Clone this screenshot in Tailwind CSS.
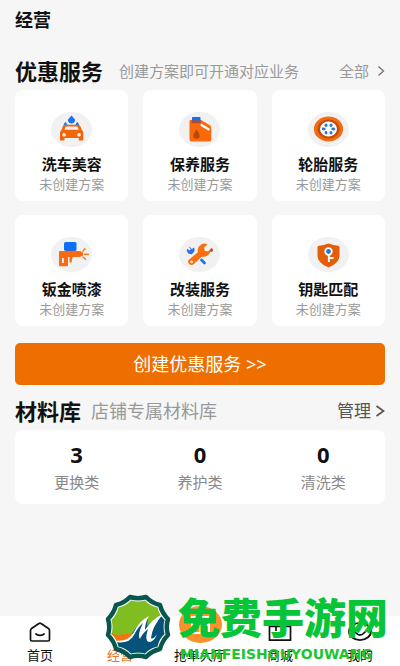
<!DOCTYPE html>
<html lang="zh-CN">
<head>
<meta charset="utf-8">
<meta name="viewport" content="width=device-width, initial-scale=1">
<title>经营</title>
<script src="https://cdn.jsdelivr.net/npm/@tailwindcss/browser@4"></script>
</head>
<body class="bg-[#f6f6f6] font-['Noto_Sans','Noto_Sans_CJK_SC',sans-serif] text-[#111]">
<div class="relative flex min-h-screen flex-col">
  <header class="flex h-10 items-center px-[15px]">
    <h1 class="text-lg font-bold leading-6">经营</h1>
  </header>

  <main class="flex-1 px-[15px] pt-3">
    <section>
      <div class="flex h-[38px] items-center">
        <h2 class="text-[22px] font-bold leading-8">优惠服务</h2>
        <p class="ml-4 text-[15px] leading-6 text-[#999]">创建方案即可开通对应业务</p>
        <a href="#" class="ml-auto flex items-center gap-2 text-[15px] leading-6 text-[#999]">全部
          <svg class="h-3 w-2" viewBox="0 0 8 12" fill="none" stroke="#777" stroke-width="1.4"><path d="M1.500 1.500 6.500 6l-5 4.500"/></svg>
        </a>
      </div>

      <div class="grid grid-cols-3 gap-x-[15px] gap-y-3.5">
        <a href="#" class="flex flex-col items-center rounded-lg bg-white pt-[22px] pb-2">
          <svg class="h-[35px] w-[41px]" viewBox="0 0 41 35"><ellipse cx="20.500" cy="17.500" rx="20.500" ry="17.500" fill="#f1f1f1"/>
            <path d="M20.500 3.500 24 7.500a3.600 3.300 0 1 1-7 0ZM14.500 9.800l1.700 2.400a1.800 1.800 0 1 1-3.400 0ZM26.300 9.800l1.700 2.400a1.800 1.800 0 1 1-3.400 0Z" fill="#1b73ee"/>
            <path fill-rule="evenodd" d="M13.700 12.700h13.600q1.600 0 2.200 1.800l1.300 3.500q1.500 1 1.500 3v7.500h-4.500V26H13.500v2.500H9V21q0-2 1.500-3l1.200-3.500q.5-1.800 2-1.800ZM14.600 14.500l-1.100 3.200h14.200l-1.300-3.200ZM13 21a1.800 1.800 0 1 0 .1 0ZM28 21a1.800 1.800 0 1 0 .1 0Z" fill="#f26509"/></svg>
          <h3 class="mt-1.5 text-[15px] font-bold leading-[22px]">洗车美容</h3>
          <p class="text-[13px] leading-[18px] text-[#999]">未创建方案</p>
        </a>
        <a href="#" class="flex flex-col items-center rounded-lg bg-white pt-[22px] pb-2">
          <svg class="h-[35px] w-[41px]" viewBox="0 0 41 35"><ellipse cx="20.500" cy="17.500" rx="20.500" ry="17.500" fill="#f1f1f1"/>
            <path d="M11.500 8H22l8.500 5q1.800 1 1.800 3v11.500q0 2-2 2H12.500q-2 0-2-2V9q0-1 1-1Z" fill="#f96a0a"/>
            <path d="M12.800 8h9v3.200h-9Z" fill="#b34b2c"/><rect x="13" y="5" width="8.500" height="3.500" rx=".7" fill="#1a70e8"/>
            <path d="m22.500 13 7 4.300" stroke="#fff" stroke-width="2.200" stroke-linecap="round"/>
            <path d="M17.500 17.500q3.300 4.500 3.200 6.200a3.200 3 0 0 1-6.400 0q0-1.700 3.200-6.200Z" fill="#bd480c"/></svg>
          <h3 class="mt-1.5 text-[15px] font-bold leading-[22px]">保养服务</h3>
          <p class="text-[13px] leading-[18px] text-[#999]">未创建方案</p>
        </a>
        <a href="#" class="flex flex-col items-center rounded-lg bg-white pt-[22px] pb-2">
          <svg class="h-[35px] w-[41px]" viewBox="0 0 41 35"><ellipse cx="20.500" cy="17.500" rx="20.500" ry="17.500" fill="#f1f1f1"/>
            <ellipse cx="20.500" cy="17" rx="14.600" ry="12.500" fill="#f26a12"/><ellipse cx="20.500" cy="17" rx="11" ry="9.400" fill="#c64b09"/><ellipse cx="20.500" cy="17" rx="8.500" ry="7.400" fill="#fff"/>
            <g fill="#2c76d8"><ellipse cx="15.700" cy="17" rx="2" ry="1.400"/><ellipse cx="25.300" cy="17" rx="2" ry="1.400"/><ellipse cx="18" cy="13.300" rx="1.500" ry="1.700"/><ellipse cx="23" cy="13.300" rx="1.500" ry="1.700"/><ellipse cx="18" cy="20.700" rx="1.500" ry="1.700"/><ellipse cx="23" cy="20.700" rx="1.500" ry="1.700"/></g></svg>
          <h3 class="mt-1.5 text-[15px] font-bold leading-[22px]">轮胎服务</h3>
          <p class="text-[13px] leading-[18px] text-[#999]">未创建方案</p>
        </a>
        <a href="#" class="flex flex-col items-center rounded-lg bg-white pt-[22px] pb-2">
          <svg class="h-[35px] w-[41px]" viewBox="0 0 41 35"><ellipse cx="20.500" cy="17.500" rx="20.500" ry="17.500" fill="#f1f1f1"/>
            <path fill-rule="evenodd" d="M9 14h20l3 1.500v3L29 20h-7.500l-1 5.500h-2V20H17v8q0 1.300-1.300 1.300H9.300Q8 29.300 8 28V15q0-1 1-1Zm2 7v5h1.800V21Z" fill="#f86b10"/>
            <path d="M15 14h9l1-1.500H14Z" fill="#a65250"/><rect x="13" y="5" width="12.500" height="8.800" rx="1.500" fill="#0c70f6"/>
            <path d="m32 14 2-2.200M33.500 17.300h4M32 20l2.500 2.200" stroke="#f57a28" stroke-width="1.500" stroke-linecap="round"/></svg>
          <h3 class="mt-1.5 text-[15px] font-bold leading-[22px]">钣金喷漆</h3>
          <p class="text-[13px] leading-[18px] text-[#999]">未创建方案</p>
        </a>
        <a href="#" class="flex flex-col items-center rounded-lg bg-white pt-[22px] pb-2">
          <svg class="h-[35px] w-[41px]" viewBox="0 0 41 35"><ellipse cx="20.500" cy="17.500" rx="20.500" ry="17.500" fill="#f1f1f1"/>
            <path d="m10.500 9.500 2.300 2.500 2.500-1.500.3 3.500-2.600 3.200-3.500-.4L7.800 14l.3-2.500 2.200 2 1.600-1.200-1.600-2Z" fill="#2c73e4"/>
            <path d="m22.500 23 3 3" stroke="#2673e8" stroke-width="2.800" stroke-linecap="round"/><path d="m30.500 13.500 1.500-2.200 1.800.5v2.400l-1.900 1.100Z" fill="#b64a25"/>
            <path fill-rule="evenodd" d="m26 6.600 2.500.6-3.500 3.500.8 3.200 3.500.4 2.200-2.300q.2 4.300-2.900 6.500-3 1.800-5.700 1l-8 7.500q-2.300 2-4.800 0-2.200-2.500.2-4.500l8.500-7.300q-.7-3.700 1.600-6.200Q22.900 6.600 26 6.600ZM12.600 23.400a1.400 1.400 0 1 0 .1 0Z" fill="#fa6e0e"/></svg>
          <h3 class="mt-1.5 text-[15px] font-bold leading-[22px]">改装服务</h3>
          <p class="text-[13px] leading-[18px] text-[#999]">未创建方案</p>
        </a>
        <a href="#" class="flex flex-col items-center rounded-lg bg-white pt-[22px] pb-2">
          <svg class="h-[35px] w-[41px]" viewBox="0 0 41 35"><ellipse cx="20.500" cy="17.500" rx="20.500" ry="17.500" fill="#f1f1f1"/>
            <path d="M20.500 6.500q5 2 9.500 2.300 1.500.2 1.500 1.700v8.500q0 7-11 11.500-11-4.500-11-11.500v-8.500q0-1.500 1.500-1.700 4.500-.3 9.500-2.300Z" fill="#e35e05"/>
            <circle cx="20.500" cy="14.500" r="3.300" fill="#2672d8" stroke="#fff" stroke-width="1.800"/><path d="M20.800 18v7M21 21h4.500" stroke="#fff" stroke-width="1.800"/></svg>
          <h3 class="mt-1.5 text-[15px] font-bold leading-[22px]">钥匙匹配</h3>
          <p class="text-[13px] leading-[18px] text-[#999]">未创建方案</p>
        </a>
      </div>

      <button type="button" class="mt-[17px] h-[42px] w-full rounded-[5px] bg-[#ee6f00] text-lg leading-6 text-white">创建优惠服务 &gt;&gt;</button>
    </section>

    <section class="mt-[7px]">
      <div class="flex h-[38px] items-center">
        <h2 class="text-[22px] font-bold leading-8">材料库</h2>
        <p class="ml-2.5 text-lg leading-6 text-[#999]">店铺专属材料库</p>
        <a href="#" class="ml-auto flex items-center gap-1 text-[17px] leading-6 text-[#555]">管理
          <svg class="h-3 w-2.5" viewBox="0 0 10 12" fill="none" stroke="#555" stroke-width="1.700"><path d="M1.500 1 8.500 6l-7 5"/></svg>
        </a>
      </div>
      <div class="grid grid-cols-3 rounded-lg bg-white pt-2.5 pb-2.5 text-center">
        <div><p class="text-[22px] font-bold leading-7">3</p><p class="mt-0.5 text-[15px] leading-6 text-[#888]">更换类</p></div>
        <div><p class="text-[22px] font-bold leading-7">0</p><p class="mt-0.5 text-[15px] leading-6 text-[#888]">养护类</p></div>
        <div><p class="text-[22px] font-bold leading-7">0</p><p class="mt-0.5 text-[15px] leading-6 text-[#888]">清洗类</p></div>
      </div>
    </section>
  </main>

  <nav class="grid h-[50px] grid-cols-5 bg-white text-[13px] leading-[22px]">
    <a href="#" class="flex flex-col items-center justify-end">
      <svg class="h-[22px] w-[22px]" viewBox="0 0 22 22" fill="none" stroke="#111" stroke-width="1.700" stroke-linejoin="round" stroke-linecap="round"><path d="M1.500 8.500Q1.500 7.500 2.500 6.500L10 1.500q1-.7 2 0l7.500 5q1 .6 1 2v9q0 1.500-1.500 1.500H3q-1.500 0-1.500-1.500ZM7 12q4 2.800 8 0"/></svg>
      <span>首页</span>
    </a>
    <a href="#" class="flex flex-col items-center justify-end text-[#ef7625]">
      <svg class="h-[22px] w-[22px]" viewBox="0 0 22 22"><path d="M2 3h18v17H2Z" fill="#f47a20"/></svg>
      <span>经营</span>
    </a>
    <a href="#" class="flex flex-col items-center justify-end">
      <svg class="-mt-2.5 h-[38px] w-[43px] shrink-0" viewBox="0 0 43 38"><ellipse cx="21.500" cy="18.500" rx="21.500" ry="18.500" fill="#fc902c"/><path d="M13 11h17v16H13ZM13 19h17M21.500 11v16" fill="none" stroke="#fff" stroke-width="2"/></svg>
      <span>抢单大厅</span>
    </a>
    <a href="#" class="flex flex-col items-center justify-end">
      <svg class="h-[22px] w-6" viewBox="0 0 24 22" fill="none" stroke="#111" stroke-width="1.700"><path d="M1.500 4.500h21v13.700h-21ZM8 9V4q0-3 4-3t4 3v5"/></svg>
      <span>商城</span>
    </a>
    <a href="#" class="flex flex-col items-center justify-end">
      <svg class="h-[22px] w-6" viewBox="0 0 24 22" fill="none" stroke="#111" stroke-width="1.800" stroke-linecap="round"><ellipse cx="12" cy="9.500" rx="11" ry="8.600"/><path d="M7 10q5 6 10 0"/></svg>
      <span>我的</span>
    </a>
  </nav>

  <div class="pointer-events-none absolute bottom-1.5 left-26 flex items-end gap-1.5">
    <svg class="h-[66px] w-[68px] shrink-0" viewBox="-34 -33 68 66">
      <path d="M-8-30Q0-27.500 8-30 13.500-24 22-22 24-14 30-8 27.500 0 30 8 24 14 22 22 13.500 24 8 30 0 27.500-8 30-13.500 24-22 22-24 14-30 8-27.500 0-30-8-24-14-22-22-13.500-24-8-30Z" fill="#fff" stroke="#07564f" stroke-width="4.500" stroke-linejoin="round"/>
      <clipPath id="seal"><path d="M-7-26.500Q0-24.500 7-26.500 12-21 19.500-19.500 21-12 26.500-7 24.500 0 26.500 7 21 12 19.500 19.500 12 21 7 26.500 0 24.500-7 26.500-12 21-19.500 19.500-21 12-26.500 7-24.500 0-26.500-7-21-12-19.500-19.500-12-21-7-26.500Z"/></clipPath>
      <g clip-path="url(#seal)">
        <path d="M-30-30h60v60h-60Z" fill="#80bd20"/>
        <path d="M-29 13Q-12 16-4 4q5-9 14-13l-1 8q8-8 20-11V30h-58Z" fill="#07527a"/>
        <path d="M-29 4q5 5 13 3.500Q-10 6-4 7q-5 7-13 8-8 0-12-4Z" fill="#f37410"/>
        <path d="M-27 12.500Q-11 17-4 5 1-6 11-11 7-4 7 3 14-8 25-13 14 0 13 11q2 2 6-4-3 8-8 8-5-1-1-13Q4 7 2 12-1 8 5-4 0 0-4 8-10 19-27 14Z" fill="#fff"/>
      </g>
    </svg>
    <div class="flex flex-col items-start text-[#08c438]">
      <span class="mb-2.5 whitespace-nowrap font-['Noto_Sans_CJK_SC',sans-serif] text-[42px] font-black leading-[44px]">免费手游网</span>
      <span class="ml-0.5 font-['DejaVu_Sans',sans-serif] text-[14px] leading-3 font-bold text-[#20c52d]">MIANFEISHOUYOUWANG</span>
    </div>
  </div>
</div>
</body>
</html>
